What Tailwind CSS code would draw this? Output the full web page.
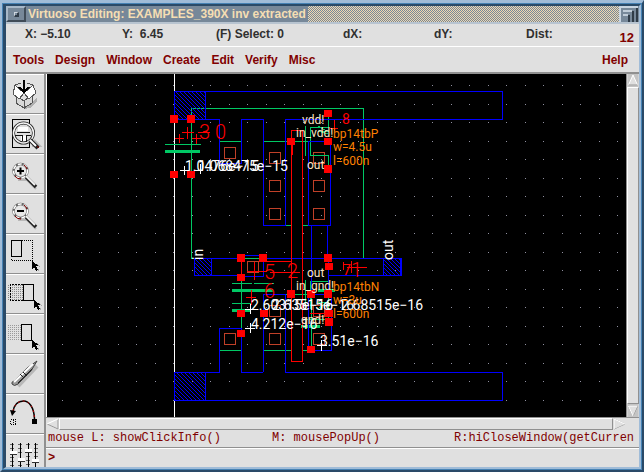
<!DOCTYPE html>
<html lang="en">
<head>
<meta charset="utf-8">
<title>Virtuoso Editing</title>
<script src="https://cdn.jsdelivr.net/npm/@tailwindcss/browser@4"></script>
</head>
<body class="h-screen overflow-hidden bg-[#a0bcd8] font-['Liberation_Sans',sans-serif] text-xs">
<svg width="0" height="0" class="absolute" aria-hidden="true">
  <defs>
    <g id="cursor"><path d="M0 0v8l2-2 2 4 2-1-2-4h3z" fill="#000"/><path d="M5 3l3 3M6 8l1 2" stroke="#a8a8a8"/></g>
    <g id="lens">
      <path d="M12 25h9l9 9" stroke="#b8b8b8" stroke-width="2" fill="none"/>
      <circle cx="14.500" cy="16" r="7" fill="#e8e8e8" stroke="#666" stroke-width="2.500"/>
      <circle cx="14.500" cy="16" r="7" fill="none" stroke="#fff" stroke-width="1.500" stroke-dasharray="4 2"/>
      <path d="M9 21a7 7 0 0 0 6 3M18 10a7 7 0 0 1 3 4" fill="none" stroke="#800000"/>
      <path d="M20 22l10 10" stroke="#222" stroke-width="3.500"/>
      <path d="M20 21l9 9" stroke="#f4f4f4" stroke-width="2"/>
    </g>
  </defs>
</svg>
<div class="flex h-full flex-col border-t-3 border-r-2 border-b-2 border-l-2 border-t-[#a0bcd8] border-r-[#2a4a68] border-b-[#2a4a68] border-l-[#a0bcd8]">
<div class="flex min-h-0 flex-1 flex-col border border-[#4682b4]">
<div class="flex min-h-0 flex-1 flex-col border-t-2 border-r-2 border-b-2 border-l-3 border-t-[#2a4a68] border-r-[#a0bcd8] border-b-[#a0bcd8] border-l-[#2a4a68] bg-[#e0e0e0]">

  <header class="flex h-[18px] shrink-0 items-stretch border-b-2 border-[#b8c4d0] bg-[#778899]">
    <button aria-label="Window menu" class="flex w-5 items-center justify-center border-2 border-t-[#a8b8c8] border-l-[#a8b8c8] border-r-[#404c58] border-b-[#404c58]"><span class="size-[5px] border-t border-l border-r-2 border-b-2 border-t-[#d0d8e0] border-l-[#d0d8e0] border-r-[#303c48] border-b-[#303c48]"></span></button>
    <h1 class="px-[2px] text-xs leading-4 font-bold whitespace-nowrap text-[#f5deb3]">Virtuoso Editing: EXAMPLES_390X inv extracted</h1>
    <div class="flex-1 bg-[repeating-conic-gradient(#f0d8b0_0_25%,#778899_0_50%)] bg-[length:2px_2px]"></div>
    <button aria-label="Resize window" class="w-5 bg-[#778899]">
      <svg width="20" height="16" shape-rendering="crispEdges" fill="none"><path d="M1 16V1h18" stroke="#c8d4e0" stroke-width="2"/><path d="M18 2v14M14 5v11M10 9v7" stroke="#303c48" stroke-width="2"/><path d="M4 5h9M4 9h5" stroke="#c0ccd8" stroke-width="2"/></svg>
    </button>
  </header>

  <section class="grid h-[23px] shrink-0 grid-cols-[97px_94px_127px_91px_92px_1fr_auto] items-start border-b border-white pt-[2px] pr-[5px] pl-[19px] leading-4 font-bold text-[#303030]" aria-label="Coordinates">
    <span>X: −5.10</span><span class="whitespace-pre">Y:  6.45</span><span>(F) Select: 0</span><span>dX:</span><span>dY:</span><span>Dist:</span><span class="pt-1 text-[13px] text-[#800000]">12</span>
  </section>

  <nav class="flex h-[27px] shrink-0 items-center gap-[11px] border-b-2 border-[#909090] px-[7px] font-bold text-[#800000]">
    <button>Tools</button><button>Design</button><button>Window</button><button>Create</button><button>Edit</button><button>Verify</button><button>Misc</button><button class="mr-1 ml-auto">Help</button>
  </nav>

  <main class="flex min-h-0 flex-1">
    <aside class="flex w-10 shrink-0 flex-col overflow-hidden border-r-2 border-[#909090]">
      <button aria-label="Save" class="h-10 w-full shrink-0 border-t border-b border-t-white border-b-[#909090]"><svg width="38" height="38" shape-rendering="crispEdges">
        <path d="M18 34l6-1 7-6v-4l-5 4z" fill="#b0b0b0"/>
        <path d="M10 20l8 6v7l-8-5zM26 20l-8 6v7l8-5z" fill="#d8d8d8" stroke="#555"/><path d="M9 10l9 8-5 6-6-5zM27 10l3 8-7 6-5-6z" fill="#fff" stroke="#555"/><path d="M9 10l6-2M27 10l-6-2" stroke="#555"/>
        <path d="M17 5h2v10h-2zM12 12h3l3 4 3-4h3l-6 7z" fill="#000"/></svg></button>
      <button aria-label="Fit" class="h-10 w-full shrink-0 border-t border-b border-t-white border-b-[#909090]"><svg width="38" height="38">
        <path d="M6.500 4.500h17v28h-17z" fill="none" stroke="#000" shape-rendering="crispEdges"/><path d="M26 31h8l-6-6" fill="none" stroke="#b8b8b8" stroke-width="2"/>
        <circle cx="17.500" cy="18" r="10" fill="#dedede" stroke="#222" stroke-width="3"/><circle cx="17.500" cy="18" r="10" fill="none" stroke="#f4f4f4" stroke-width="1.500"/>
        <g shape-rendering="crispEdges"><path d="M12 12h10v4H12zM15 21h5v5h-5z" fill="#fff"/><path d="M11 17h13M9 20h7v6M20 20h5M20 20v7" fill="none" stroke="#111" stroke-width="1"/></g>
        <path d="M24 25l8 8" stroke="#222" stroke-width="4"/><path d="M24 25l6 6" stroke="#fff" stroke-width="2"/><path d="M31 31l2 2" stroke="#800000"/></svg></button>
      <button aria-label="Zoom in" class="h-10 w-full shrink-0 border-t border-b border-t-white border-b-[#909090]"><svg width="38" height="38"><use href="#lens"/><path d="M11 16h7M14.500 12.500v7" stroke="#000" stroke-width="2"/></svg></button>
      <button aria-label="Zoom out" class="h-10 w-full shrink-0 border-t border-b border-t-white border-b-[#909090]"><svg width="38" height="38"><use href="#lens"/><path d="M11 16h7" stroke="#000" stroke-width="2"/></svg></button>
      <button aria-label="Stretch" class="h-10 w-full shrink-0 border-t border-b border-t-white border-b-[#909090]"><svg width="38" height="38" shape-rendering="crispEdges" fill="none"><path d="M16 5.500h10.500v20H5.500v-3" stroke="#000" stroke-dasharray="1 1"/><path d="M5.500 5.500h10v16h-10z" stroke="#000"/><use href="#cursor" x="26" y="26"/></svg></button>
      <button aria-label="Copy" class="h-10 w-full shrink-0 border-t border-b border-t-white border-b-[#909090]"><svg width="38" height="38" shape-rendering="crispEdges" fill="none"><path d="M2 10.500h15M2 12.500h15M2 14.500h15M2 16.500h15M2 18.500h15M2 20.500h15M2 22.500h15M2 24.500h15" stroke="#888" stroke-dasharray="1 1"/><path d="M17 9.500H4.500v16H17" stroke="#000" stroke-dasharray="2 1"/><path d="M17.500 9.500h10v16h-10z" stroke="#000"/><use href="#cursor" x="28" y="25"/></svg></button>
      <button aria-label="Move" class="h-10 w-full shrink-0 border-t border-b border-t-white border-b-[#909090]"><svg width="38" height="38" shape-rendering="crispEdges" fill="none"><path d="M2 10.500h13M2 12.500h13M2 14.500h13M2 16.500h13M2 18.500h13M2 20.500h13M2 22.500h13M2 24.500h13" stroke="#999" stroke-dasharray="1 1"/><path d="M15.500 9.500h10v16h-10z" stroke="#000"/><use href="#cursor" x="26" y="25"/></svg></button>
      <button aria-label="Delete" class="h-10 w-full shrink-0 border-t border-b border-t-white border-b-[#909090]"><svg width="38" height="38" fill="none"><path d="M12 31L31 11" stroke="#b8b8b8" stroke-width="4"/><path d="M8 26L21 13 31 6 25 16 12 29q-4 3-6 0-1-2 2-3z" fill="#999" stroke="#444"/><path d="M8 27L27 9" stroke="#fff" stroke-width="2"/><path d="M14 19l4 4M17 17l4 4M12 28L26 14" stroke="#222"/></svg></button>
      <button aria-label="Undo" class="h-10 w-full shrink-0 border-t border-b border-t-white border-b-[#909090]"><svg width="38" height="38" fill="none"><path d="M7 17C8 10 12 6 17.500 6S28 12 28.500 24" stroke="#000" stroke-width="1.500"/><path d="M7 16C8 10 12 6 17.500 6S28 12 28.500 24" stroke="#c00000" stroke-dasharray="2 3"/><path d="M4 15l6 1-4 5z" fill="#000"/><path d="M26 24h5v5h-5z" fill="#000"/><path d="M4.500 24.500h5v5h-5zM7 25v4" stroke="#000" stroke-dasharray="1 1" shape-rendering="crispEdges"/></svg></button>
      <button aria-label="Properties" class="h-10 w-full shrink-0 border-t border-t-white"><svg width="38" height="38" shape-rendering="crispEdges" fill="none"><path d="M4 8h4M4 12h4M4 21h4M4 25h4M4 29h4M12 8h4M12 12h4M12 16h4M12 29h4M20 8h4M20 20h4M20 24h4M20 28h4M28 8h4M28 12h4M28 16h4M28 20h4" stroke="#666" stroke-width="1"/><path d="M6.500 7v26M14.500 7v26M22.500 7v26M29.500 7v26" stroke="#000" stroke-width="1"/><path d="M4 15h7v3H4zM12 22h7v3h-7zM19 13h7v3h-7zM26 23h7v3h-7z" fill="#fff"/><path d="M4 18.500h7M12 25.500h7M19 16.500h7M26 26.500h7" stroke="#333"/></svg></button>
    </aside>

    <div class="flex min-w-0 flex-1 flex-col">
      <div class="flex min-h-0 flex-1">
        <div class="min-w-0 flex-1 overflow-hidden border-l border-white bg-black">
          <svg class="block size-full font-['Roboto',sans-serif]" shape-rendering="crispEdges" fill="none" role="img" aria-label="Inverter layout">
            <defs>
              <pattern id="dots" x="25" y="48" width="37" height="37" patternUnits="userSpaceOnUse"><path d="M0 0h1v1h-1zM19 0h1v1h-1zM0 19h1v1h-1zM19 19h1v1h-1z" fill="#9090a0"/></pattern>
              <pattern id="hatch" width="4" height="4" patternUnits="userSpaceOnUse"><path d="M0 0h1v1h-1zM1 1h1v1h-1zM2 2h1v1h-1zM3 3h1v1h-1z" fill="#0000ff"/></pattern>
            </defs>
            <g transform="translate(-47 -74)">
              <rect x="47" y="74" width="2000" height="1500" fill="url(#dots)"/>
              <path d="M174.500 74v2000" stroke="#fff"/>
              <g stroke="#c04028"><path d="M224.500 147.500h11v11h-11zM269.500 152.500h11v11h-11zM269.500 180.500h11v11h-11zM269.500 208.500h11v11h-11zM313.500 152.500h11v11h-11zM313.500 180.500h11v11h-11zM313.500 208.500h11v11h-11zM247.500 261.500h11v11h-11zM269.500 305.500h11v11h-11zM313.500 305.500h11v11h-11zM224.500 333.500h11v11h-11zM269.500 333.500h11v11h-11zM313.500 333.500h11v11h-11z"/></g>
              <g stroke="#00c864">
                <path d="M191.500 258.500V108.500H363.500V258M191.500 258.500H328M165 144.500h36M219 141.500h22M263 141.500h45M285 225.500h7M302 225.500h6M305.500 126v30M310.500 127v28h18v12M328.500 113v14h-18M318 126l10 6-10-1 10 3"/>
                <path d="M165 151.500h35M232 290.500h41M232 310.500h18M301 326.500h19M318 290.500h17" stroke-width="3"/>
                <path d="M232 283.500h20M254 283.500h20M232 303.500h20M241.500 258v75M263 294.500h67M219 350.500h22M263 350.500h28M303 350.500h6M311.500 294v55M328.500 258v60M310.500 281.500h18M305.500 280v30M310.500 281v28M318 309l9-7-9 1M303 319h22"/>
              </g>
              <g stroke="#0000ff">
                <path d="M174.500 91.500H502.500V119.500H285.500V225.500H263.500V119.500H241.500V163.500H219.500V119.500H174.500zM205.500 91v28M308.500 141.500h22v84h-22zM311.500 225v69M327.500 225v34M194.500 258.500h47v-3h22v21h-22v-1h-47zM263 258.500H401V275.500H328M383.500 258v17M211.500 258v17M328.500 259v35M308.500 294.500h23v56h-23zM263.500 372V294.500h22V372M219.500 372V328.500h22V372M174.500 372.500h45M241 372.500h22M285 372.500H502.500V400.500H174.500V372M205.500 372v28M400.500 258v17"/>
              </g>
              <path d="M174 91h31v28h-31zM194 258h17v17h-17zM383 258h17v17h-17zM174 372h31v28h-31z" fill="url(#hatch)"/>
              <path d="M263 261.500h28.500V130.500h11V361.500h-11V261M241.500 277v-19M292.500 141v14M175 138.500h9M179.500 134v9M182 132.500h12M187.500 127v12M192 138.500h9M196.500 134v10M198 132.500h12M343 262v8M347 267.500h20M351.500 261v12M247 271.500h20M254.500 262v18M270 272.500h30M246 297.500h10M251.500 290v15M310 313.500h18M334.500 120v11M330 128.500h8" stroke="#f00"/>
              <path d="M170 115h8v8h-8zM187 115h8v8h-8zM170 171h8v7h-8zM187 171h8v7h-8zM324 110h8v7h-8zM287 138h8v7h-8zM324 138h8v7h-8zM324 165h8v8h-8zM237 254h8v8h-8zM259 254h8v8h-8zM324 254h8v8h-8zM325 263h8v7h-8zM237 274h8v7h-8zM260 310h8v7h-8zM287 290h8v8h-8zM307 290h8v8h-8zM324 290h8v8h-8zM237 310h8v7h-8zM325 310h8v7h-8zM325 318h8v8h-8zM237 330h8v7h-8zM307 346h8v7h-8z" fill="#f00"/>
              <g fill="#f00" font-size="20" font-weight="300"><text x="199" y="139">3</text><text x="215" y="139">0</text><text x="264" y="279">5</text><text x="287" y="278">2</text><text x="264" y="298">6</text><text x="351" y="277">1</text></g>
              <g fill="#f00" font-size="14"><text x="342" y="124">8</text><text x="343" y="275">7</text></g>
              <g fill="#fff" font-size="14">
                <path d="M180 170.500h9M184.500 166v9M194 170.500h9M200.500 164v10M245 309.500h10M250.500 304v10M245 328.500h10M250.500 323v10M317 345.500h10M321.500 340v11" stroke="#fff"/>
                <text x="185" y="171">1.0476e−15</text><text x="198" y="171">1.068475e−15</text>
                <text x="251" y="310">2.60315e−16</text><text x="272" y="310">2.63515e−16</text><text x="341" y="310">2.68515e−16</text>
                <text x="251" y="329">4.212e−16</text><text x="320" y="346">3.51e−16</text>
              </g>
              <g fill="#fff" font-size="14"><text transform="translate(203 260) rotate(-90)">in</text><text transform="translate(393 260) rotate(-90)">out</text></g>
              <g fill="#ffe4c4" font-size="12"><text x="302" y="124">vdd!</text><text x="296" y="137">in_vdd!</text><text x="307" y="169">out</text><text x="307" y="277">out</text><text x="296" y="290">in_gnd!</text><text x="301" y="324">gnd!</text></g>
              <g fill="#ff8000" font-size="12"><text x="333" y="138">bp14tbP</text><text x="333" y="151">w=4.5u</text><text x="333" y="165">l=600n</text><text x="333" y="291">bp14tbN</text><text x="333" y="304">w=3u</text><text x="333" y="318">l=600n</text></g>
            </g>
          </svg>
        </div>
        <div class="flex w-[13px] shrink-0 flex-col border-l border-[#909090]" role="scrollbar" aria-label="Vertical" aria-controls="prompt" aria-valuenow="0">
          <svg class="h-[13px] w-full shrink-0" viewBox="0 0 11 13" fill="#e0e0e0"><path d="M0 0h11v13H0z" fill="#c4c4c4"/><path d="M1 11l4.500-10 4.500 10z" stroke="#fff"/><path d="M10 11H1" stroke="#888"/></svg>
          <div class="flex-1 border border-t-white border-r-[#909090] border-b-[#909090] border-l-white"></div>
          <svg class="h-[13px] w-full shrink-0" viewBox="0 0 11 13" fill="#e0e0e0"><path d="M0 0h11v13H0z" fill="#c4c4c4"/><path d="M1 2l4.500 10L10 2z" stroke="#888"/><path d="M10 2H1l4.500 10" stroke="#fff"/></svg>
        </div>
      </div>
      <div class="flex h-[13px] shrink-0 border-t border-[#909090] pr-[13px]" role="scrollbar" aria-label="Horizontal" aria-orientation="horizontal" aria-controls="prompt" aria-valuenow="0">
        <svg width="13" height="12" fill="#e0e0e0"><path d="M12 1v10L1 6z" stroke="#fff"/><path d="M12 1v10L1 6" stroke="#999"/><path d="M1 6l11-5" stroke="#fff"/></svg>
        <div class="flex-1 border border-t-white border-r-[#909090] border-b-[#909090] border-l-white"></div>
        <svg width="13" height="12" fill="#e0e0e0"><path d="M1 1v10l11-5z" stroke="#999"/><path d="M1 11V1l11 5" stroke="#fff"/></svg>
      </div>
      <div class="grid h-[18px] shrink-0 grid-cols-[224px_182px_1fr] overflow-hidden border-b border-[#909090] pl-[2px] font-['Liberation_Mono',monospace] leading-4 whitespace-nowrap text-[#800000]">
        <span>mouse L: showClickInfo()</span><span>M: mousePopUp()</span><span>R:hiCloseWindow(getCurren</span>
      </div>
      <div class="flex h-[19px] shrink-0 items-center border-t border-white pl-[2px] font-['Liberation_Mono',monospace] font-bold text-[#800000]">
        <label for="prompt">&gt;</label><input id="prompt" class="min-w-0 flex-1 bg-transparent pl-2 outline-none">
      </div>
    </div>
  </main>
</div>
</div>
</div>
</body>
</html>
